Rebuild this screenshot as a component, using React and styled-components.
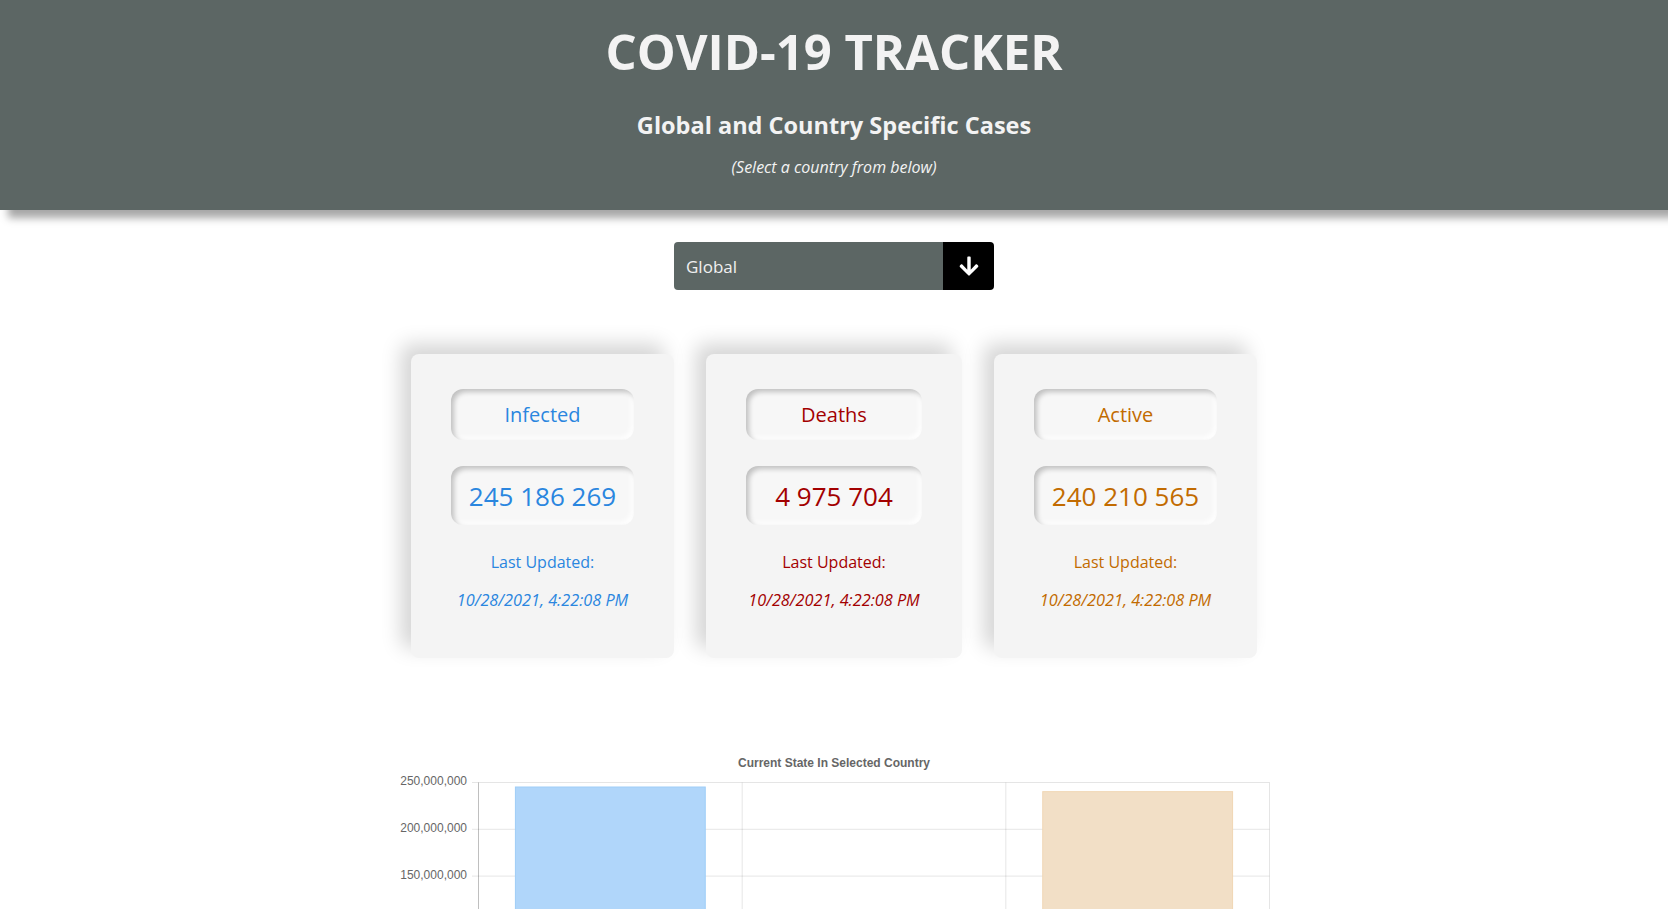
import React from "react";
import styled, { createGlobalStyle } from "styled-components";
import { FaArrowDown } from "react-icons/fa";

const GlobalStyle = createGlobalStyle`
  html, body {
    margin: 0;
    padding: 0;
    background: #fff;
    font-family: "Open Sans", "Noto Sans", sans-serif;
  }
`;

const Header = styled.header`
  background: #5c6664;
  color: #f3f3f3;
  text-align: center;
  padding: 21px 0 33px;
  box-shadow: 8px 8px 8px rgba(0, 0, 0, 0.35);
`;

const Title = styled.h1`
  margin: 0;
  font-size: 49px;
  line-height: 60px;
  font-weight: 700;
`;

const Subtitle = styled.h2`
  margin: 29px 0 0;
  font-size: 23.5px;
  line-height: 30px;
  font-weight: 700;
`;

const Hint = styled.p`
  margin: 17px 0 0;
  font-size: 16px;
  line-height: 20px;
  font-style: italic;
`;

const Dropdown = styled.div`
  display: flex;
  width: 320px;
  height: 48px;
  margin: 32px auto 0;
  border-radius: 4px;
  overflow: hidden;
`;

const Select = styled.select`
  flex: 1;
  appearance: none;
  border: none;
  outline: none;
  background: #5c6664;
  color: #f0f0f0;
  font-family: "Open Sans", sans-serif;
  font-size: 17px;
  padding: 0 12px;
`;

const ArrowBox = styled.div`
  width: 51px;
  background: #000;
  color: #fff;
  display: flex;
  align-items: center;
  justify-content: center;
  font-size: 22px;
`;

const Cards = styled.div`
  display: flex;
  justify-content: center;
  gap: 32px;
  margin-top: 64px;
`;

const Card = styled.div`
  width: ${(p) => p.$w}px;
  box-sizing: border-box;
  background: #f4f4f4;
  border-radius: 8px;
  padding: 35px 38px 47px;
  box-shadow: -10px -10px 20px rgba(0, 0, 0, 0.17);
  color: ${(p) => p.$color};
  text-align: center;
`;

const Well = styled.div`
  height: ${(p) => p.$h}px;
  margin: 0 2px;
  display: flex;
  align-items: center;
  justify-content: center;
  border-radius: 12px;
  background: #f7f7f7;
  box-shadow: inset 3px 3px 5px rgba(0, 0, 0, 0.22),
    inset -3px -3px 5px rgba(255, 255, 255, 0.9);
  font-size: ${(p) => p.$size}px;
  & + & {
    margin-top: 26px;
  }
`;

const Updated = styled.div`
  margin-top: 26px;
  font-size: 16px;
  line-height: 22px;
`;

const Stamp = styled.div`
  margin-top: 16px;
  font-size: 16.3px;
  line-height: 22px;
  font-style: italic;
`;

const ChartWrap = styled.div`
  width: 872px;
  margin: 82px auto 0;
  svg {
    display: block;
    font-family: "Liberation Sans", Arial, sans-serif;
  }
`;

const stats = [
  { label: "Infected", value: 245186269, color: "#2a86df", w: 263, bar: "#b0d6fa", barBorder: "#9fcdf7" },
  { label: "Deaths", value: 4975704, color: "#a30000", w: 256, bar: "#ffc4cf", barBorder: "#ffb1c1" },
  { label: "Active", value: 240210565, color: "#c26b00", w: 263, bar: "#f2dfc6", barBorder: "#f0d6b4" },
];

const fmt = (n) => n.toLocaleString("en-US").replace(/,/g, " ");

const Chart = () => {
  const top = 42.5;
  const per = 46.8; // px per 50M
  const zero = top + per * 5;
  const left = 80.5;
  const right = 871.5;
  const cat = (right - left) / 3;
  const ticks = [250, 200, 150, 100, 50, 0];
  return (
    <svg width="872" height="320">
      <text x="436" y="27" textAnchor="middle" fontSize="12" fontWeight="700" fill="#666">
        Current State In Selected Country
      </text>
      {ticks.map((t, i) => {
        const y = top + i * per;
        return (
          <g key={t}>
            <line x1="74" x2={right} y1={y} y2={y} stroke="rgba(0,0,0,0.1)" />
            <text x="69" y={y + 2.5} textAnchor="end" fontSize="12" fill="#666">
              {t === 0 ? "0" : `${t},000,000`}
            </text>
          </g>
        );
      })}
      {[0, 1, 2, 3].map((i) => (
        <line
          key={i}
          x1={left + i * cat}
          x2={left + i * cat}
          y1={top}
          y2={zero + 7}
          stroke={i === 0 ? "rgba(0,0,0,0.25)" : "rgba(0,0,0,0.1)"}
        />
      ))}
      {stats.map((s, i) => {
        const bw = cat * 0.72;
        const x = left + i * cat + (cat - bw) / 2;
        const h = (s.value / 50000000) * per;
        return (
          <g key={s.label}>
            <rect x={x} y={zero - h} width={bw} height={h} fill={s.bar} stroke={s.barBorder} strokeWidth="1" />
            <text x={left + i * cat + cat / 2} y={zero + 22} textAnchor="middle" fontSize="12" fill="#666">
              {s.label}
            </text>
          </g>
        );
      })}
    </svg>
  );
};

export default function App() {
  return (
    <>
      <GlobalStyle />
      <Header>
        <Title>COVID-19 TRACKER</Title>
        <Subtitle>Global and Country Specific Cases</Subtitle>
        <Hint>(Select a country from below)</Hint>
      </Header>
      <Dropdown>
        <Select defaultValue="global">
          <option value="global">Global</option>
        </Select>
        <ArrowBox>
          <FaArrowDown />
        </ArrowBox>
      </Dropdown>
      <Cards>
        {stats.map((s) => (
          <Card key={s.label} $w={s.w} $color={s.color}>
            <Well $h={51} $size={20}>{s.label}</Well>
            <Well $h={59} $size={26}>{fmt(s.value)}</Well>
            <Updated>Last Updated:</Updated>
            <Stamp>10/28/2021, 4:22:08 PM</Stamp>
          </Card>
        ))}
      </Cards>
      <ChartWrap>
        <Chart />
      </ChartWrap>
    </>
  );
}
